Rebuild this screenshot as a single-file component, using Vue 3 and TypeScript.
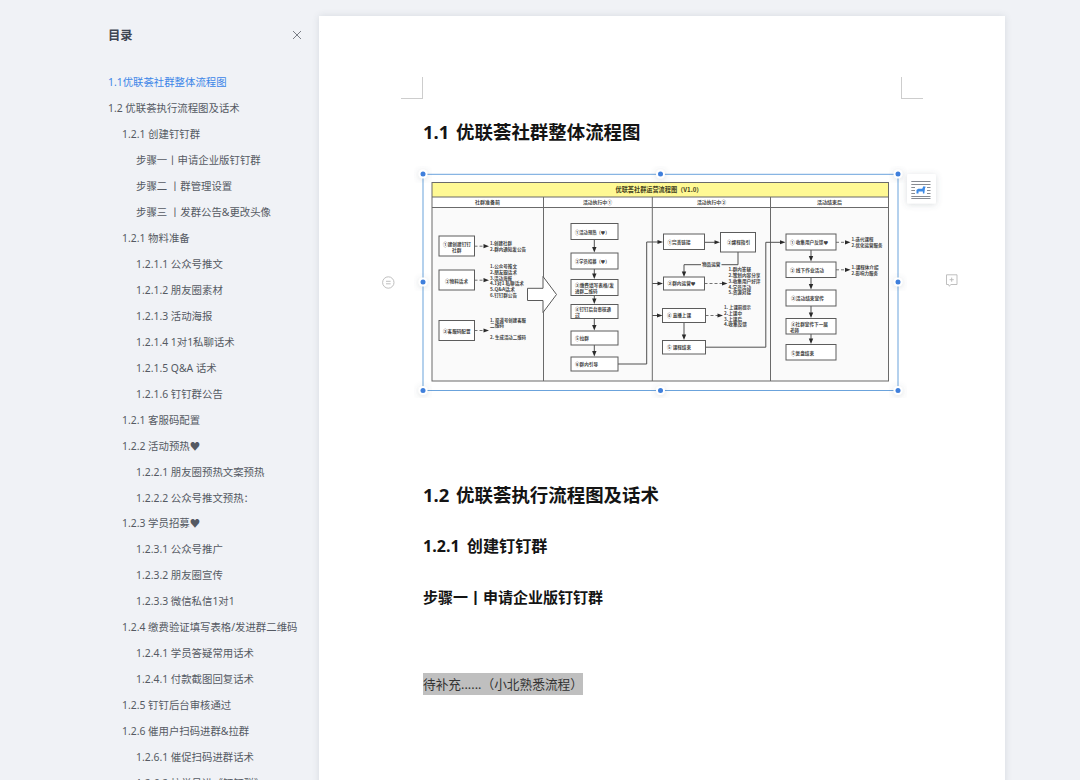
<script setup lang="ts">
interface TocItem { level: number; text: string; active?: boolean }
interface Box { x: number; y: number; w: number; h: number }
interface Label { x: number; y: number; w: number; t: string }

const toc: TocItem[] = [
  { level: 0, text: '1.1优联荟社群整体流程图', active: true },
  { level: 0, text: '1.2 优联荟执行流程图及话术' },
  { level: 1, text: '1.2.1 创建钉钉群' },
  { level: 2, text: '步骤一丨申请企业版钉钉群' },
  { level: 2, text: '步骤二 丨群管理设置' },
  { level: 2, text: '步骤三 丨发群公告&更改头像' },
  { level: 1, text: '1.2.1 物料准备' },
  { level: 2, text: '1.2.1.1 公众号推文' },
  { level: 2, text: '1.2.1.2 朋友圈素材' },
  { level: 2, text: '1.2.1.3 活动海报' },
  { level: 2, text: '1.2.1.4 1对1私聊话术' },
  { level: 2, text: '1.2.1.5 Q&A 话术' },
  { level: 2, text: '1.2.1.6 钉钉群公告' },
  { level: 1, text: '1.2.1 客服码配置' },
  { level: 1, text: '1.2.2 活动预热♥' },
  { level: 2, text: '1.2.2.1 朋友圈预热文案预热' },
  { level: 2, text: '1.2.2.2 公众号推文预热：' },
  { level: 1, text: '1.2.3 学员招募♥' },
  { level: 2, text: '1.2.3.1 公众号推广' },
  { level: 2, text: '1.2.3.2 朋友圈宣传' },
  { level: 2, text: '1.2.3.3 微信私信1对1' },
  { level: 1, text: '1.2.4 缴费验证填写表格/发进群二维码' },
  { level: 2, text: '1.2.4.1 学员答疑常用话术' },
  { level: 2, text: '1.2.4.1 付款截图回复话术' },
  { level: 1, text: '1.2.5 钉钉后台审核通过' },
  { level: 1, text: '1.2.6 催用户扫码进群&拉群' },
  { level: 2, text: '1.2.6.1 催促扫码进群话术' },
  { level: 2, text: '1.2.6.2 拉学员进《钉钉群》' },
]

const boxes: Box[] = [
  { x: 439, y: 236, w: 35.5, h: 20 },
  { x: 439, y: 270, w: 35.5, h: 20 },
  { x: 439, y: 320.5, w: 35.5, h: 20 },
  { x: 571, y: 223.5, w: 47, h: 16 },
  { x: 571, y: 253, w: 47, h: 16 },
  { x: 571, y: 279.5, w: 47, h: 16 },
  { x: 571, y: 304.5, w: 47, h: 14 },
  { x: 571, y: 331, w: 47, h: 14 },
  { x: 571, y: 357, w: 47, h: 14 },
  { x: 663.5, y: 234, w: 41, h: 15.5 },
  { x: 720.5, y: 232.5, w: 35, h: 19.5 },
  { x: 663.5, y: 277, w: 41, h: 13 },
  { x: 662.5, y: 308.5, w: 43, h: 14 },
  { x: 662.5, y: 340.5, w: 43, h: 13.5 },
  { x: 786, y: 234, w: 50, h: 16 },
  { x: 786, y: 262, w: 50, h: 15.5 },
  { x: 786, y: 290, w: 50, h: 16 },
  { x: 786, y: 318.5, w: 50, h: 15.5 },
  { x: 786, y: 344.5, w: 50, h: 15.5 },
]

const headings: Label[] = [
  { x: 475, y: 204.3, w: 25, t: '社群准备前' },
  { x: 583, y: 204.3, w: 29, t: '活动执行中①' },
  { x: 697, y: 204.3, w: 29, t: '活动执行中②' },
  { x: 817, y: 204.3, w: 25, t: '活动结束后' },
]

const labels: Label[] = [
  { x: 443, y: 245.5, w: 28, t: '①建创建钉钉' },
  { x: 452, y: 251.5, w: 9.5, t: '社群' },
  { x: 445, y: 282.5, w: 23, t: '②物料话术' },
  { x: 443, y: 333.3, w: 27.5, t: '③客服码配置' },
  { x: 575, y: 234, w: 34.5, t: '①活动预热（♥）' },
  { x: 575, y: 263, w: 34.5, t: '②学员招募（♥）' },
  { x: 575, y: 286.8, w: 39, t: '③缴费填写表格/发' },
  { x: 575, y: 292.8, w: 22.5, t: '进群二维码' },
  { x: 575, y: 311, w: 36, t: '④钉钉后台审核通' },
  { x: 575, y: 317, w: 5, t: '过' },
  { x: 575, y: 340, w: 14, t: '⑤拉群' },
  { x: 575, y: 366, w: 23, t: '⑥群内引导' },
  { x: 667.5, y: 244.3, w: 23, t: '①完善链接' },
  { x: 727, y: 244.3, w: 23, t: '②課程指引' },
  { x: 702, y: 266.3, w: 18.5, t: '物品运营' },
  { x: 667.5, y: 285.3, w: 28, t: '③群内运营♥' },
  { x: 667, y: 317.3, w: 24, t: '④ 直播上课' },
  { x: 667, y: 349.3, w: 24, t: '⑤ 课程结束' },
  { x: 790, y: 244.3, w: 38, t: '① 收集用户反馈♥' },
  { x: 790, y: 272, w: 34, t: '② 线下作业活动' },
  { x: 791, y: 300, w: 33, t: '③活动结束宣传' },
  { x: 791, y: 325.8, w: 37, t: '④社群宣传下一届' },
  { x: 790, y: 331.5, w: 9, t: '老師' },
  { x: 791, y: 354.5, w: 23, t: '⑤复盘结束' },
  { x: 490, y: 245.3, w: 22, t: '1.创建社群' },
  { x: 490, y: 251.3, w: 36, t: '2.群内通知发公告' },
  { x: 490, y: 268, w: 27, t: '1.公众号推文' },
  { x: 490, y: 273.9, w: 27, t: '2.朋友圈话术' },
  { x: 490, y: 279.7, w: 22, t: '3.活动海报' },
  { x: 490, y: 285.4, w: 34, t: '4.1对1 私聊话术' },
  { x: 490, y: 291.1, w: 25, t: '5.Q&A话术' },
  { x: 490, y: 296.8, w: 27, t: '6.钉钉群公告' },
  { x: 490, y: 321.7, w: 36, t: '1. 渠道号创建客服' },
  { x: 490, y: 327.3, w: 14, t: '二维码' },
  { x: 490, y: 338.8, w: 36, t: '2. 生成活动二维码' },
  { x: 728.5, y: 271.3, w: 22.5, t: '1.群内答疑' },
  { x: 728.5, y: 277.1, w: 32, t: '2.策划内容分享' },
  { x: 728.5, y: 282.9, w: 32, t: '3.收集用户好评' },
  { x: 728.5, y: 288.6, w: 22.5, t: '4.学员活动' },
  { x: 728.5, y: 294.3, w: 22.5, t: '5.资源对接' },
  { x: 724, y: 309, w: 27, t: '1. 上课前提示' },
  { x: 724, y: 314.7, w: 18, t: '2.上课中' },
  { x: 724, y: 320.5, w: 18, t: '3.上课后' },
  { x: 724, y: 326.2, w: 23, t: '4.收集反馈' },
  { x: 851.5, y: 241.3, w: 22, t: '1.迭代课程' },
  { x: 851.5, y: 247.3, w: 31, t: '2.优化运营服务' },
  { x: 851.5, y: 269.3, w: 27, t: '1.课程体介绍' },
  { x: 851.5, y: 275.1, w: 26.5, t: '2.影响力服务' },
]

// Vertical arrows: x, start y, tip y
const downArrows = [
  [594.3, 239.5, 252.5], [594.3, 269, 279], [594.3, 295.5, 304], [594.3, 318.5, 330.5], [594.3, 345, 356.5],
  [684, 322.5, 340], [811, 250, 261.5], [811, 277.5, 289.5], [811, 306, 318], [811, 334, 344],
]
// Dashed arrows: start x, y, tip x
const dashed = [
  [474.5, 246.2, 489], [474.5, 280.2, 489], [474.5, 330.5, 489],
  [704.5, 283.5, 727.5], [705.5, 315.5, 723], [836, 242.3, 850.5], [836, 269.8, 850.5],
]
const handles = [
  [423, 174], [660.5, 174], [898, 174], [423, 282], [898, 282], [423, 390.5], [660.5, 390.5], [898, 390.5],
]
</script>

<template>
  <div class="screen">
    <aside class="toc">
      <header class="toc-head">
        <h2>目录</h2>
        <svg class="close" width="10" height="10" viewBox="0 0 10 10"><path d="M1 1 9 9M9 1 1 9" /></svg>
      </header>
      <ul>
        <li v-for="(item, i) in toc" :key="i" :class="['lv' + item.level, { active: item.active }]">{{ item.text }}</li>
      </ul>
    </aside>

    <main class="paper">
      <div class="corners"><i class="corner left"></i><i class="corner right"></i></div>
      <h1 class="first">1.1 优联荟社群整体流程图</h1>

      <div class="figure">
        <svg width="600" height="232" viewBox="380 166 600 232">
          <defs>
            <filter id="soft" x="-50%" y="-50%" width="200%" height="200%">
              <feDropShadow dx="0" dy="1" stdDeviation="3" flood-color="#56606e" flood-opacity=".22" />
            </filter>
          </defs>
          <rect x="432" y="182.5" width="456.5" height="198.5" fill="#fafafa" />
          <rect x="432" y="197" width="456.5" height="10.5" fill="#fff" />
          <rect x="432" y="182.5" width="456.5" height="14.5" fill="#fff994" />
          <g class="frame">
            <rect x="432" y="182.5" width="456.5" height="198.5" />
            <path d="M432 197H888.5M432 207.5H888.5M543.5 197V381M652.3 197V381M770.5 197V381" />
          </g>
          <path class="big-arrow" d="M527.5 288.3H543V276.5L556.5 294.5 543 312.5V300.5H527.5Z" />

          <g class="wire">
            <path v-for="(a, i) in downArrows" :key="'d' + i" :d="`M${a[0]} ${a[1]}V${a[2] - 4}`" />
            <path d="M618 364H646.7V242H658M652.3 283.5H658M652.3 315.5H658M704.5 242.3H716M738 252V264.7H684V273M705.5 347.2H765.8V242.3H781" />
          </g>
          <g class="wire dash">
            <path v-for="(a, i) in dashed" :key="'h' + i" :d="`M${a[0]} ${a[1]}H${a[2] - 5}`" />
          </g>
          <g class="head">
            <path v-for="(a, i) in downArrows" :key="'t' + i" :d="`M${a[0] - 2.2} ${a[2] - 5.5}h4.4l-2.2 5.5z`" />
            <path d="M681.8 271.5h4.4L684 277z" />
            <path v-for="(a, i) in dashed" :key="'r' + i" :d="`M${a[2] - 5.5} ${a[1] - 2.1}v4.2l5.5-2.1z`" />
            <path d="M657.5 240v4l5.5-2zM657.5 281.5v4l5.5-2zM657 313.5v4l5.5-2zM714.5 240.3v4l5.5-2zM780 240.3v4l5.5-2z" />
          </g>
          <rect x="701" y="262" width="20.5" height="5.5" fill="#fafafa" />
          <rect v-for="(b, i) in boxes" :key="'b' + i" class="box" :x="b.x" :y="b.y" :width="b.w" :height="b.h" />
          <text class="title" x="615.5" y="192.4" textLength="87" lengthAdjust="spacingAndGlyphs">优联荟社群运营流程图（V1.0）</text>
          <text v-for="(l, i) in headings" :key="'c' + i" class="small" :x="l.x" :y="l.y" :textLength="l.w" lengthAdjust="spacingAndGlyphs">{{ l.t }}</text>
          <text v-for="(l, i) in labels" :key="'l' + i" class="small" :x="l.x" :y="l.y" :textLength="l.w" lengthAdjust="spacingAndGlyphs">{{ l.t }}</text>

          <rect class="selection" x="423" y="174.3" width="475" height="216.2" />
          <g v-for="(h, i) in handles" :key="'s' + i">
            <circle :cx="h[0]" :cy="h[1]" r="4.5" fill="#fff" filter="url(#soft)" />
            <circle :cx="h[0]" :cy="h[1]" r="2.5" fill="#3f7fdc" />
          </g>

          <g class="outline">
            <circle cx="388.3" cy="282.5" r="5.7" />
            <path d="M386 281.3h4.6M386 283.8h4.6" />
          </g>
          <g class="outline">
            <path d="M946.5 274.8H957V284.5H951L949.2 286.2 948.6 284.5H946.5ZM951.7 277.6V281.8M949.6 279.7H953.8" />
          </g>

          <rect x="907" y="174" width="29" height="29.5" rx="1.5" fill="#fff" filter="url(#soft)" />
          <path class="wrap-lines" d="M911.3 181.5H930.5M911.3 184.5H930.5M911.3 187.5H915M911.3 190.5H915M911.3 193.5H915M911.3 196.5H930.5M911.3 198.5H930.5M927 187.5H930.5M927 190.5H930.5M927 193.5H930.5" />
          <path d="M916.5 193.5V190L918.2 188.7H922.2L923.4 186.2 925.7 186.7 925 188.3 924.3 193.5H922.9V191.4H918.5V193.5Z" fill="#3c8ae6" />
        </svg>
      </div>

      <h1>1.2 优联荟执行流程图及话术</h1>
      <h3>1.2.1 创建钉钉群</h3>
      <h4>步骤一丨申请企业版钉钉群</h4>
      <p><span>待补充......（小北熟悉流程）</span></p>
    </main>
  </div>
</template>

<style>
body { margin: 0; overflow: hidden; }
</style>

<style scoped>
.screen {
  display: flex;
  width: 1080px;
  height: 780px;
  overflow: hidden;
  background: #f0f2f6;
  font-family: "Noto Sans", "Noto Sans CJK SC", sans-serif;
}
h1, h2, h3, h4, p, ul { margin: 0; padding: 0; }
.toc { width: 319px; flex: none; box-sizing: border-box; padding: 25px 0 0 108px; }
.toc-head { display: flex; align-items: center; justify-content: space-between; height: 20px; padding-right: 17px; }
.toc-head h2 { padding-top: 2px; font-size: 12.3px; font-weight: 700; line-height: 20px; color: #3e4552; }
.close { fill: none; stroke: #7a7e86; stroke-width: 1; }
ul { list-style: none; padding-top: 24px; }
li { height: 25.98px; line-height: 26px; font-size: 10.4px; color: #555a63; white-space: nowrap; }
.lv1 { padding-left: 14px; }
.lv2 { padding-left: 28px; }
.active { color: #3c86e8; }
.paper {
  width: 686px;
  height: 790px;
  flex: none;
  box-sizing: border-box;
  margin-top: 16px;
  padding: 61px 0 0 104px;
  background: #fff;
  box-shadow: 0 0 7px rgba(50, 60, 80, .13);
  color: #141414;
}
.corners { display: flex; justify-content: space-between; width: 522px; height: 22px; margin-left: -22px; }
.corner { width: 21px; height: 21px; border-bottom: 1px solid #cdcdcd; }
.left { border-right: 1px solid #cdcdcd; }
.right { border-left: 1px solid #cdcdcd; }
h1 { height: 28px; line-height: 28px; font-size: 18.45px; font-weight: 700; word-spacing: 2px; white-space: nowrap; }
.first { margin-top: 19px; }
.figure { height: 232px; margin: 20px 0 83px -43px; }
.figure svg { display: block; font-family: "Noto Sans CJK SC", sans-serif; }
h3 { margin-top: 25px; height: 24px; line-height: 24px; font-size: 16.1px; word-spacing: 3px; }
h4 { margin-top: 27px; height: 24px; line-height: 24px; font-size: 15px; }
p { margin-top: 64px; height: 22px; font-size: 12.7px; line-height: 22px; color: #333; }
p span { display: inline-block; width: 160px; height: 22px; background: #bfbfbf; white-space: nowrap; }
.frame { fill: none; stroke: #6a6a6a; stroke-width: 1; }
.big-arrow { fill: #fff; stroke: #5a5a5a; stroke-width: 1; }
.wire { fill: none; stroke: #505050; stroke-width: 1; }
.dash { stroke-dasharray: 3 2; stroke-width: .8; }
.head { fill: #2a2a2a; }
.box { fill: #fff; stroke: #5c5c5c; stroke-width: 1; }
.title { font-size: 6.3px; font-weight: 700; fill: #45431f; }
.small { font-size: 4.8px; font-weight: 700; fill: #444; }
.selection { fill: none; stroke: #6ba3dc; stroke-width: 1; }
.outline { fill: none; stroke: #b8b8b8; stroke-width: .9; }
.wrap-lines { fill: none; stroke: #878b92; stroke-width: 1.1; }
</style>
